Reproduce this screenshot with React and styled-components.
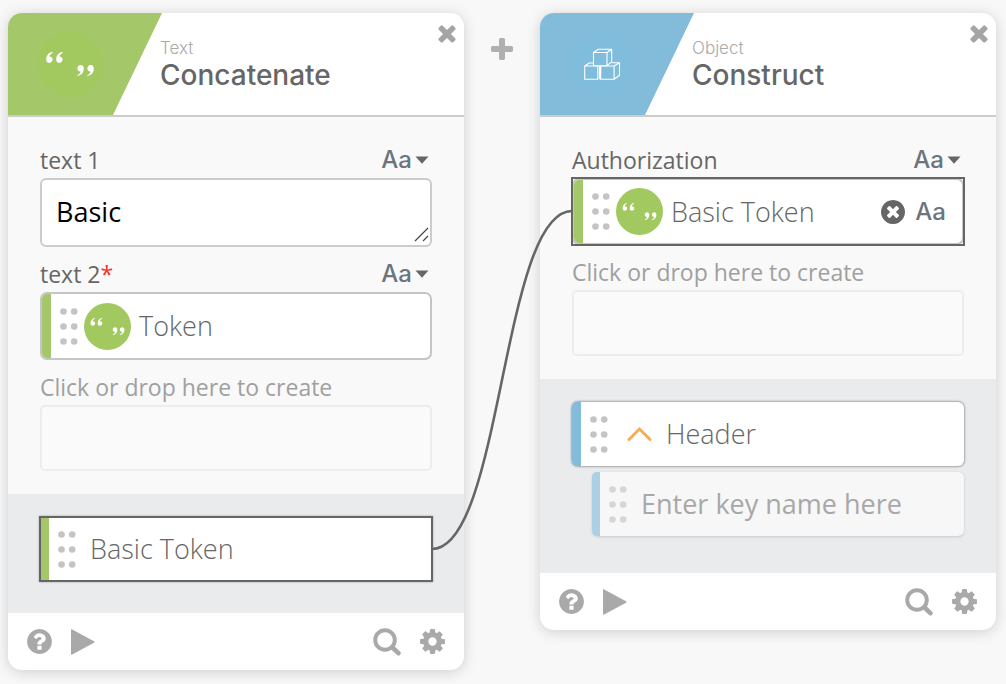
import React from 'react';
import styled, { createGlobalStyle, css } from 'styled-components';

const GlobalStyle = createGlobalStyle`
  * {
    box-sizing: border-box;
  }

  body {
    margin: 0;
    background: #f8f8f8;
    color: #666;
    font-family: 'Open Sans', sans-serif;
  }

  button {
    display: flex;
    align-items: center;
    padding: 0;
    border: 0;
    background: none;
    color: inherit;
    font: inherit;
    cursor: pointer;
  }
`;

const Canvas = styled.main`
  display: flex;
  align-items: flex-start;
  min-height: 100vh;
  padding: 13px 10px 13px 8px;
  overflow: hidden;
`;

const CardBox = styled.section`
  position: relative;
  z-index: ${({ $front }) => ($front ? 1 : 0)};
  flex: 1;
  min-width: 0;
  border-radius: 14px;
  background: #fff;
  box-shadow: 0 2px 14px rgba(0, 0, 0, 0.17);
`;

const CardHeader = styled.header`
  display: flex;
  height: 104px;
  border-bottom: 2px solid #ccc;
`;

// Slanted colour panel behind the function icon
const Banner = styled.div`
  display: flex;
  align-items: center;
  width: 154px;
  margin-right: -2px;
  padding-left: 29px;
  border-top-left-radius: 14px;
  background: ${({ $color }) => $color};
  clip-path: polygon(0 0, 100% 0, 105px 100%, 0 100%);
`;

const Heading = styled.div`
  flex: 1;
  min-width: 0;
  padding-top: 25px;
  font-family: Inter, sans-serif;
`;

const Category = styled.div`
  color: #aaa;
  font-size: 17px;
  font-weight: 300;
  line-height: 20px;
`;

const Title = styled.h2`
  margin: 0;
  color: #666;
  font-size: 28px;
  font-weight: 500;
  line-height: 34px;
`;

const CloseButton = styled.button`
  align-self: flex-start;
  margin: 7px 4px 0 0;
  color: #a5a5a5;
`;

// Column between two cards
const Gutter = styled.div`
  display: flex;
  justify-content: center;
  width: 76px;
  padding-top: 23px;
  color: #b0b0b0;
`;

const Inputs = styled.div`
  display: flex;
  flex-direction: column;
  gap: 13px;
  padding: 29px 32px 23px;
  background: #f9f9f9;
`;

const Outputs = styled.div`
  display: flex;
  flex-direction: column;
  gap: 6px;
  padding: 23px 32px ${({ $bottom }) => $bottom};
  background: #e9ebed;
`;

const FieldLabel = styled.div`
  display: flex;
  justify-content: space-between;
  align-items: center;
  height: 28px;
  margin-bottom: 4px;
  color: ${({ $muted }) => ($muted ? '#a0a0a0' : '#666')};
  font-size: 23px;
  line-height: 28px;
  white-space: nowrap;
`;

const Required = styled.span`
  color: #f0321e;
`;

const TypeText = styled.span`
  color: #6b757d;
  font-family: Inter, sans-serif;
  font-size: 24px;
  font-weight: 500;
  line-height: 28px;
`;

const TypeButton = styled.button`
  gap: 3px;
  padding-right: 3px;
`;

const TextAreaWrap = styled.div`
  position: relative;
  height: 69px;

  svg {
    position: absolute;
    right: 3px;
    bottom: 5px;
  }
`;

const TextArea = styled.textarea`
  display: block;
  width: 100%;
  height: 100%;
  padding: 14px;
  border: 2px solid #ccc;
  border-radius: 6px;
  outline: 0;
  background: #fff;
  color: #000;
  font: 27px/36px 'Open Sans', sans-serif;
  overflow: hidden;
  resize: none;
`;

const DropInput = styled.input`
  display: block;
  width: 100%;
  height: 66px;
  padding: 0 14px;
  border: 2px solid #ededed;
  border-radius: 5px;
  outline: 0;
  background: #fafafa;
  font: 27px 'Open Sans', sans-serif;
`;

// Square frame drawn over both ends of a wire
const selectedFrame = css`
  &::after {
    content: '';
    position: absolute;
    inset: ${({ $inset }) => $inset || '-1px'};
    border: 2px solid #666;
    pointer-events: none;
  }
`;

const Token = styled.div`
  position: relative;
  display: flex;
  align-items: center;
  height: ${({ $selected }) => ($selected ? '67px' : '68px')};
  padding-right: 16px;
  border: 2px solid #c5c5c5;
  border-radius: 7px;
  background: #fff;
  ${({ $selected }) => $selected && selectedFrame}
`;

const OutputItem = styled.div`
  position: relative;
  display: flex;
  align-items: center;
  height: 64px;
  margin-left: ${({ $nested }) => ($nested ? '20px' : '0')};
  border-radius: ${({ $selected }) => ($selected ? '0' : '6px')};
  background: ${({ $nested }) => ($nested ? '#f7f7f7' : '#fff')};
  box-shadow: ${({ $nested }) =>
    $nested ? '0 1px 3px rgba(0, 0, 0, 0.15)' : '0 0 2px 1px rgba(0, 0, 0, 0.3)'};
  ${({ $selected }) => $selected && selectedFrame}
`;

const ColorBar = styled.span`
  flex: none;
  align-self: stretch;
  width: ${({ $narrow }) => ($narrow ? '8px' : '9px')};
  margin-right: 9px;
  border-radius: ${({ $square }) => ($square ? '0' : '5px 0 0 5px')};
  background: ${({ $color }) => $color};
`;

const Name = styled.span`
  flex: 1;
  margin-left: ${({ $gap }) => $gap};
  color: #666;
  font-size: 27px;
  font-weight: 300;
  line-height: 36px;
  white-space: nowrap;
`;

const Badge = styled.span`
  display: flex;
  margin-left: 6px;
`;

const KeyInput = styled.input`
  flex: 1;
  min-width: 0;
  margin-left: 14px;
  padding: 0;
  border: 0;
  outline: 0;
  background: none;
  font: 27px/36px 'Open Sans', sans-serif;

  &::placeholder {
    color: #a8a8a8;
    opacity: 1;
  }
`;

const RemoveButton = styled.button`
  margin-right: 8px;
  color: #666;
`;

const CollapseButton = styled.button`
  margin-left: 19px;
`;

// Wire from an output to the next card's input; spans the gutter and both paddings
const Wire = styled.svg`
  position: absolute;
  left: 100%;
  bottom: 50%;
  overflow: visible;
  pointer-events: none;
`;

const CardFooter = styled.footer`
  display: flex;
  align-items: center;
  gap: 17px;
  height: 57px;
  padding: 0 17px;
  color: #a9a9a9;
`;

const Spacer = styled.span`
  flex: 1;
`;

const GREEN = '#a4c869';
const BLUE = '#83bcdb';

const FaGlyph = ({ size, d }) => (
  <svg width={size} height={size} viewBox="0 0 1792 1792" fill="currentColor" aria-hidden="true">
    <path d={d} />
  </svg>
);

const TIMES =
  'M1490 1322q0 40-28 68l-136 136q-28 28-68 28t-68-28l-294-294-294 294q-28 28-68 28t-68-28l-136-136q-28-28-28-68t28-68l294-294-294-294q-28-28-28-68t28-68l136-136q28-28 68-28t68 28l294 294 294-294q28-28 68-28t68 28l136 136q28 28 28 68t-28 68l-294 294 294 294q28 28 28 68z';
const PLUS =
  'M1600 736v192q0 40-28 68t-68 28h-416v416q0 40-28 68t-68 28h-192q-40 0-68-28t-28-68v-416h-416q-40 0-68-28t-28-68v-192q0-40 28-68t68-28h416v-416q0-40 28-68t68-28h192q40 0 68 28t28 68v416h416q40 0 68 28t28 68z';
const TIMES_CIRCLE =
  'M1277 1122q0-26-19-45l-181-181 181-181q19-19 19-45 0-27-19-46l-90-90q-19-19-46-19-26 0-45 19l-181 181-181-181q-19-19-45-19-27 0-46 19l-90 90q-19 19-19 46 0 26 19 45l181 181-181 181q-19 19-19 45 0 27 19 46l90 90q19 19 46 19 26 0 45-19l181-181 181 181q19 19 45 19 27 0 46-19l90-90q19-19 19-46zm387-226q0 209-103 385.5t-279.5 279.5-385.5 103-385.5-103-279.5-279.5-103-385.5 103-385.5 279.5-279.5 385.5-103 385.5 103 279.5 279.5 103 385.5z';
const QUESTION_CIRCLE =
  'M1024 1376v-192q0-14-9-23t-23-9h-192q-14 0-23 9t-9 23v192q0 14 9 23t23 9h192q14 0 23-9t9-23zm256-672q0-88-55.5-163t-138.5-116-170-41q-243 0-371 213-15 24 8 42l132 100q7 6 19 6 16 0 25-12 53-68 86-92 34-24 86-24 48 0 85.5 26t37.5 59q0 38-20 61t-68 45q-63 28-115.5 86.5t-52.5 125.5v36q0 14 9 23t23 9h192q14 0 23-9t9-23q0-19 21.5-49.5t54.5-49.5q32-18 49-28.5t46-35 44.5-48 28-60.5 12.5-81zm384 192q0 209-103 385.5t-279.5 279.5-385.5 103-385.5-103-279.5-279.5-103-385.5 103-385.5 279.5-279.5 385.5-103 385.5 103 279.5 279.5 103 385.5z';
const COG =
  'M1152 896q0-106-75-181t-181-75-181 75-75 181 75 181 181 75 181-75 75-181zm512-109v222q0 12-8 23t-20 13l-185 28q-19 54-39 91 35 50 107 138 10 12 10 25t-9 23q-27 37-99 108t-94 71q-12 0-26-9l-138-108q-44 23-91 38-16 136-29 186-7 28-36 28h-222q-14 0-24.5-8.5t-11.5-21.5l-28-184q-49-16-90-37l-141 107q-10 9-25 9-14 0-25-11-126-114-165-168-7-10-7-23 0-12 8-23 15-21 51-66.5t54-70.5q-27-50-41-99l-183-27q-13-2-21-12.5t-8-23.5v-222q0-12 8-23t19-13l186-28q14-46 39-92-40-57-107-138-10-12-10-24 0-10 9-23 26-36 98.5-107.5t94.5-71.5q13 0 26 10l138 107q44-23 91-38 16-136 29-186 7-28 36-28h222q14 0 24.5 8.5t11.5 21.5l28 184q49 16 90 37l142-107q9-9 24-9 13 0 25 10 129 119 165 170 7 8 7 22 0 12-8 23-15 21-51 66.5t-54 70.5q26 50 41 98l183 28q13 2 21 12.5t8 23.5z';

const QUOTE =
  'M.2 7.4C.2 3.4 2.8.6 6.4 0l.3.9C4.6 1.8 3.4 3.2 3.3 4.6c1.9-.2 3.3 1.2 3.3 3 0 1.9-1.4 3.3-3.2 3.3C1.4 10.9.2 9.4.2 7.4Z';

const QuotesIcon = ({ size }) => (
  <svg width={size} height={size} viewBox="0 0 66 66" aria-hidden="true">
    <circle cx="33" cy="33" r="33" fill="#a2c95f" />
    <g fill="#fff">
      <path d={QUOTE} transform="translate(9 21)" />
      <path d={QUOTE} transform="translate(19 21)" />
      <path d={QUOTE} transform="translate(47 45) rotate(180)" />
      <path d={QUOTE} transform="translate(57 45) rotate(180)" />
    </g>
  </svg>
);

const CubesIcon = ({ size }) => (
  <svg width={size} height={size} viewBox="0 0 66 66" aria-hidden="true">
    <circle cx="33" cy="33" r="33" fill="#80bddc" />
    <g fill="none" stroke="#fff" strokeWidth="1.1" strokeLinejoin="round">
      <path d="M24.5 21.5H38v13.2H24.5zM24.5 21.5l4.8-3.3h13.4L38 21.5M42.7 18.2v12.6L38 34.7" />
      <path d="M28.5 35H15.7v13.3h13.1V35M15.7 35l4.6-3h4.2" />
      <path d="M30.6 35v13.3M31.7 35h13.4v13.3H31.7zM45.1 35l5.4-3.2v12.4l-5.4 4.1M50.5 31.8h-7.8" />
    </g>
  </svg>
);

const DragDots = ({ faded }) => (
  <svg width="18" height="37" viewBox="0 0 18 37" fill={faded ? '#d6d6d6' : '#c4c4c4'} aria-hidden="true">
    {[3.5, 18.5, 33.5].map((y) => (
      <React.Fragment key={y}>
        <circle cx="3.5" cy={y} r="3.3" />
        <circle cx="14.2" cy={y} r="3.3" />
      </React.Fragment>
    ))}
  </svg>
);

const TypePicker = () => (
  <TypeButton>
    <TypeText>Aa</TypeText>
    <svg width="14" height="8" viewBox="0 0 14 8" aria-hidden="true">
      <path d="M.5.5h13L7 7.8z" fill="#666" />
    </svg>
  </TypeButton>
);

const DropField = ({ id }) => (
  <div>
    <FieldLabel $muted>
      <label htmlFor={id}>Click or drop here to create</label>
    </FieldLabel>
    <DropInput id={id} />
  </div>
);

// A value dragged in from a text card
const TextToken = ({ name, selected, children }) => (
  <Token $selected={selected} $inset="-3px">
    <ColorBar $color={GREEN} />
    <DragDots />
    <Badge>
      <QuotesIcon size={47} />
    </Badge>
    <Name $gap="8px">{name}</Name>
    {children}
  </Token>
);

const Card = ({ category, title, color, icon, front, children }) => (
  <CardBox $front={front}>
    <CardHeader>
      <Banner $color={color}>{icon}</Banner>
      <Heading>
        <Category>{category}</Category>
        <Title>{title}</Title>
      </Heading>
      <CloseButton aria-label="Close">
        <FaGlyph size={26} d={TIMES} />
      </CloseButton>
    </CardHeader>
    {children}
    <CardFooter>
      <button aria-label="Help">
        <FaGlyph size={29} d={QUESTION_CIRCLE} />
      </button>
      <button aria-label="Run">
        <svg width="24" height="26" viewBox="0 0 24 26" fill="currentColor" aria-hidden="true">
          <path d="M0 1.2Q0-.2 1.2.5L23 12.2q1 .8 0 1.6L1.2 25.5Q0 26.2 0 24.8z" />
        </svg>
      </button>
      <Spacer />
      <button aria-label="Search">
        <svg width="28" height="28" viewBox="0 0 28 28" fill="none" stroke="currentColor" aria-hidden="true">
          <circle cx="12" cy="12" r="9.8" strokeWidth="3.9" />
          <path d="m19.5 19.5 5.9 5.7" strokeWidth="4.6" strokeLinecap="round" />
        </svg>
      </button>
      <button aria-label="Settings">
        <FaGlyph size={29} d={COG} />
      </button>
    </CardFooter>
  </CardBox>
);

const App = () => (
  <>
    <GlobalStyle />
    <Canvas>
      <Card category="Text" title="Concatenate" color={GREEN} icon={<QuotesIcon size={66} />} front>
        <Inputs>
          <div>
            <FieldLabel>
              <label htmlFor="text-1">text 1</label>
              <TypePicker />
            </FieldLabel>
            <TextAreaWrap>
              <TextArea id="text-1" rows={1} defaultValue="Basic" />
              <svg width="15" height="15" viewBox="0 0 15 15" stroke="#444" strokeWidth="1.2" aria-hidden="true">
                <path d="M1 14 14 1M9 14l5-5" />
              </svg>
            </TextAreaWrap>
          </div>
          <div>
            <FieldLabel>
              <span>
                text 2<Required>*</Required>
              </span>
              <TypePicker />
            </FieldLabel>
            <TextToken name="Token" />
          </div>
          <DropField id="concat-new" />
        </Inputs>
        <Outputs $bottom="32px">
          <OutputItem $selected>
            <ColorBar $color={GREEN} $square />
            <DragDots />
            <Name $gap="14px">Basic Token</Name>
            <Wire width="140" height="338" viewBox="0 0 140 338" aria-hidden="true">
              <path d="M0 338C70 338 70 0 140 0" fill="none" stroke="#666" strokeWidth="2.6" />
            </Wire>
          </OutputItem>
        </Outputs>
      </Card>

      <Gutter>
        <button aria-label="Add card">
          <FaGlyph size={28} d={PLUS} />
        </button>
      </Gutter>

      <Card category="Object" title="Construct" color={BLUE} icon={<CubesIcon size={66} />}>
        <Inputs>
          <div>
            <FieldLabel>
              <span>Authorization</span>
              <TypePicker />
            </FieldLabel>
            <TextToken name="Basic Token" selected>
              <RemoveButton aria-label="Remove">
                <FaGlyph size={28} d={TIMES_CIRCLE} />
              </RemoveButton>
              <TypeText>Aa</TypeText>
            </TextToken>
          </div>
          <DropField id="construct-new" />
        </Inputs>
        <Outputs $bottom="37px">
          <OutputItem>
            <ColorBar $color={BLUE} />
            <DragDots />
            <CollapseButton aria-label="Collapse">
              <svg width="25" height="16" viewBox="0 0 25 16" fill="none" aria-hidden="true">
                <path d="M2 13.5 12.5 3 23 13.5" stroke="#f2ae52" strokeWidth="3" strokeLinecap="round" />
              </svg>
            </CollapseButton>
            <Name $gap="14px">Header</Name>
          </OutputItem>
          <OutputItem $nested>
            <ColorBar $color="#abd0e3" $narrow />
            <DragDots faded />
            <KeyInput aria-label="Key name" placeholder="Enter key name here" />
          </OutputItem>
        </Outputs>
      </Card>
    </Canvas>
  </>
);

export default App;
